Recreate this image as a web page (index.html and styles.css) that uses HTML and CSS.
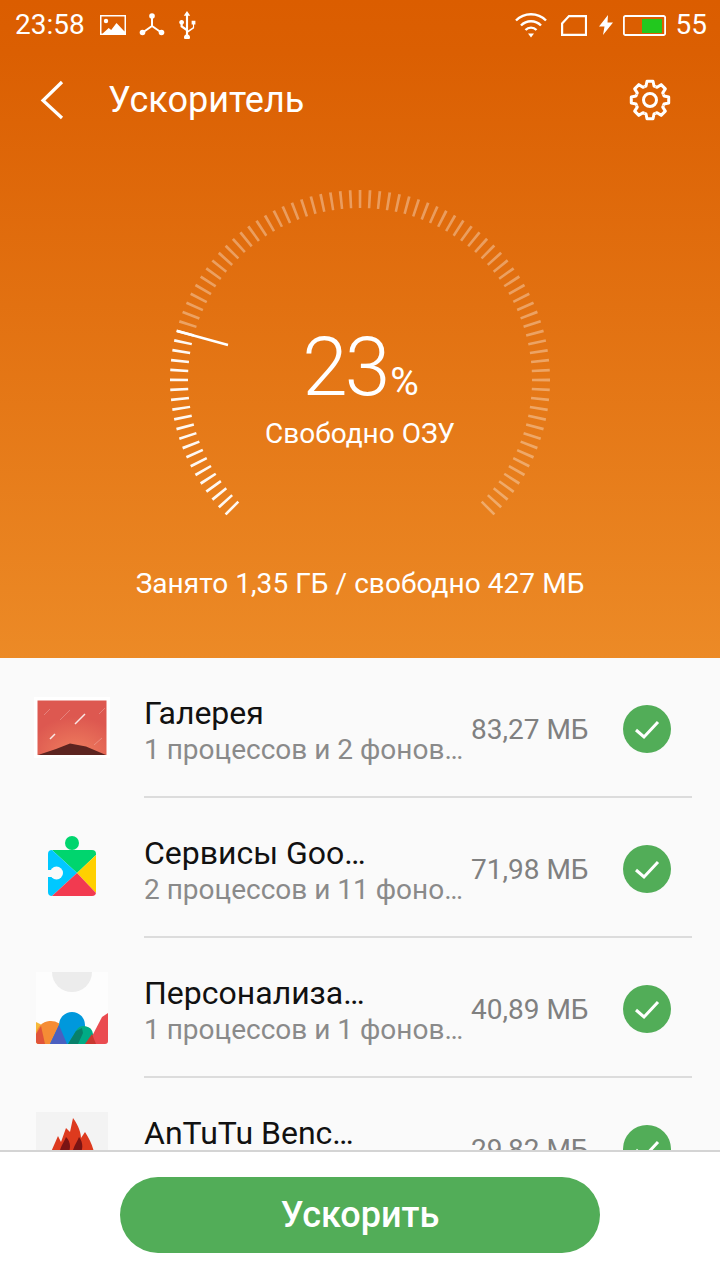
FILE: index.html
```html
<!DOCTYPE html>
<html lang="ru">
<head>
<meta charset="utf-8">
<title>Ускоритель</title>
<link rel="stylesheet" href="styles.css">
</head>
<body>
<div class="screen">
  <section class="hero">
    <div class="status">
      <div class="status-left">
        <span class="clock">23:58</span>
        <svg class="si si-img" viewBox="0 0 26 20"><path fill="#fff" fill-rule="evenodd" d="M0 0h26v20H0zM1.500 1.500v17h1.200l6-5.500 2.500 2 5.300-7 8 8.500V1.500z"/><circle cx="6" cy="6" r="2.200" fill="#fff"/></svg>
        <svg class="si si-tri" viewBox="0 0 26 24"><path fill="none" stroke="#fff" stroke-width="2" d="M13 3v10L3 20M13 13l10 7"/><circle cx="13" cy="3" r="2.800" fill="#fff"/><circle cx="3.500" cy="19.500" r="2.800" fill="#fff"/><circle cx="22.500" cy="19.500" r="2.800" fill="#fff"/></svg>
        <svg class="si si-usb" viewBox="0 0 18 26"><path fill="#fff" d="M9 0l3 4.500h-2v13.500l4.500-3v-2.500h-1.200v-3.500h3.500v3.500h-1.200v3.500l-5.600 4v1.800a2.800 2.800 0 1 1-2 0v-3.500l-5-3.500v-2.300a2.200 2.200 0 1 1 2 0v1.300l3 2V4.500H6z"/></svg>
      </div>
      <div class="status-right">
        <svg class="si si-wifi" viewBox="0 0 32 26"><g fill="none" stroke="#fff" stroke-width="2.400"><path d="M1 8.500a21 21 0 0 1 30 0"/><path d="M6 13.500a14 14 0 0 1 20 0"/><path d="M10.500 18a7.500 7.500 0 0 1 11 0"/></g><path fill="#fff" d="M13 21.500h6l-3 4z"/></svg>
        <svg class="si si-sim" viewBox="0 0 26 21"><path fill="none" stroke="#fff" stroke-width="2.200" d="M1.100 8.500L8 1.100h17v18.800H1.100z"/></svg>
        <svg class="si si-bolt" viewBox="0 0 14 20"><path fill="#fff" d="M9 0L0 11.500h5.500L4 20l10-12.500H8.500z"/></svg>
        <svg class="si si-bat" viewBox="0 0 44 21"><path fill="none" stroke="#fff" stroke-width="1.800" d="M3.500 1h38a1.600 1.600 0 0 1 1.600 1.600v15.800a1.600 1.600 0 0 1-1.600 1.600h-38a1.600 1.600 0 0 1-1.600-1.600V2.600A1.600 1.600 0 0 1 3.500 1z"/><rect x="20" y="4" width="20" height="14" fill="#22c81e"/></svg>
        <span class="clock">55</span>
      </div>
    </div>
    <div class="toolbar">
      <svg class="back" viewBox="0 0 24 40"><path fill="none" stroke="#fff" stroke-width="3.200" d="M22 2L3 20.500 22 38"/></svg>
      <h1 class="title">Ускоритель</h1>
      <svg class="gear" viewBox="-21 -21 42 42">
        <defs><path id="tooth" d="M-5.550-13.400L-4-14l1-4.700h6L4-14l1.550.6"/></defs>
        <g fill="none" stroke="#fff" stroke-width="3" stroke-linejoin="round">
          <use href="#tooth"/><use href="#tooth" transform="rotate(45)"/><use href="#tooth" transform="rotate(90)"/><use href="#tooth" transform="rotate(135)"/><use href="#tooth" transform="rotate(180)"/><use href="#tooth" transform="rotate(225)"/><use href="#tooth" transform="rotate(270)"/><use href="#tooth" transform="rotate(315)"/>
          <circle r="6.500"/>
        </g>
      </svg>
    </div>
    <div class="gauge">
      <svg class="gauge-dial" viewBox="0 0 400 340">
        <path class="ticks ticks-on" pathLength="20.333" d="M73.100 329.100A181 181 0 0 1 25.600 151.600"/>
        <path class="ticks ticks-off" pathLength="69.333" d="M27.400 145.600A181 181 0 1 1 326.900 329.100"/>
        <line class="needle" x1="17" y1="151" x2="68" y2="165"/>
      </svg>
      <div class="gauge-value">
        <div class="percent"><span class="num">23</span><span class="sign">%</span></div>
        <div class="free">Свободно ОЗУ</div>
      </div>
    </div>
    <p class="usage">Занято 1,35 ГБ / свободно 427 МБ</p>
  </section>

  <main class="list">
    <div class="row">
      <svg class="icon" viewBox="0 0 72 72">
        <defs><radialGradient id="glow" cx=".55" cy="1" r=".7"><stop offset="0" stop-color="#f0805f"/><stop offset="1" stop-color="#dd5850"/></radialGradient></defs>
        <rect x="-2" y="5" width="76" height="61" fill="#fff"/>
        <rect x="1.500" y="8.500" width="69" height="54.500" fill="url(#glow)"/>
        <path fill="#5c2420" d="M2 63l18-6 14-5.500 16 3 20 8.500z"/>
        <path stroke="#fff" stroke-width="1.500" d="M39 32l10-10M14 47l5-5" opacity=".85"/>
        <path stroke="#fff" stroke-width="1" d="M8 23l6-6M24 28l10-10M63 22l6-6M58 53l8-7" opacity=".25"/>
      </svg>
      <div class="row-body">
        <div class="row-text">
          <div class="name">Галерея</div>
          <div class="procs">1 процессов и 2 фоновых</div>
        </div>
        <span class="size">83,27 МБ</span>
        <svg class="check" viewBox="0 0 48 48"><circle cx="24" cy="24" r="24" fill="#52ad58"/><path fill="none" stroke="#fff" stroke-width="3" d="M13 25l8 7 14-15"/></svg>
      </div>
    </div>
    <div class="row">
      <svg class="icon" viewBox="0 0 72 72">
        <defs><clipPath id="pz"><rect x="12" y="18" width="48" height="46" rx="4"/></clipPath></defs>
        <circle cx="36" cy="11" r="7" fill="#00d56e"/>
        <g clip-path="url(#pz)">
          <path fill="#00d56e" d="M12 18h48v5L41 41 16 18z"/>
          <path fill="#00c8ff" d="M12 18h4l25 23-25 23h-4z"/>
          <path fill="#ffd000" d="M60 23v38L41 41z"/>
          <path fill="#f23a50" d="M41 41l19 20v3H16z"/>
        </g>
        <circle cx="20.500" cy="41" r="6.500" fill="#fafafa"/>
        <rect x="10" y="38" width="8" height="7" fill="#fafafa"/>
      </svg>
      <div class="row-body">
        <div class="row-text">
          <div class="name">Сервисы Google Play</div>
          <div class="procs">2 процессов и 11 фоновых</div>
        </div>
        <span class="size">71,98 МБ</span>
        <svg class="check" viewBox="0 0 48 48"><circle cx="24" cy="24" r="24" fill="#52ad58"/><path fill="none" stroke="#fff" stroke-width="3" d="M13 25l8 7 14-15"/></svg>
      </div>
    </div>
    <div class="row">
      <svg class="icon" viewBox="0 0 72 72">
        <defs><clipPath id="hl"><rect width="72" height="72" rx="3"/></clipPath></defs>
        <rect width="72" height="72" fill="#fdfdfd"/>
        <path fill="#ececec" d="M16 0h40a20 20 0 0 1-40 0z"/>
        <g clip-path="url(#hl)">
          <path fill="#f6b93b" d="M0 50l8 4v18H0z"/>
          <path fill="#f58c35" d="M0 72V62a15 15 0 0 1 29-3l3 13z"/>
          <path fill="#e0533a" d="M0 72V62l5-8 4 18z"/>
          <path fill="#0098dc" d="M14 72l9-19a13 13 0 0 1 26 0v19z"/>
          <path fill="#4a5fc0" d="M14 72l9-19 8 19z"/>
          <path fill="#00ab85" d="M32 72l8-13a9 9 0 0 1 17 3v10z"/>
          <path fill="#08806a" d="M32 72l8-13 6-3 1 5-5 11z"/>
          <path fill="#ea4b50" d="M52 72l14-27 6-4v31z"/>
          <path fill="#c9382f" d="M49 72l7-10 4 10z"/>
        </g>
      </svg>
      <div class="row-body">
        <div class="row-text">
          <div class="name">Персонализация</div>
          <div class="procs">1 процессов и 1 фоновых</div>
        </div>
        <span class="size">40,89 МБ</span>
        <svg class="check" viewBox="0 0 48 48"><circle cx="24" cy="24" r="24" fill="#52ad58"/><path fill="none" stroke="#fff" stroke-width="3" d="M13 25l8 7 14-15"/></svg>
      </div>
    </div>
    <div class="row">
      <svg class="icon" viewBox="0 0 72 72">
        <rect width="72" height="72" fill="#f3f3f3"/>
        <path fill="#dd3a1e" d="M15 40L22 24l3 6 5-14 4 4 3-14c6 8 8 16 8 20l4-6c4 6 7 12 9 20v32H15z"/>
        <path fill="#7a1414" d="M24 38c2-6 5-10 6-13 4 4 5 9 3 15zM37 38c2-6 5-10 6-13 4 5 4 11 2 15z"/>
      </svg>
      <div class="row-body">
        <div class="row-text">
          <div class="name">AnTuTu Benchmark</div>
          <div class="procs">1 процессов и 1 фоновых</div>
        </div>
        <span class="size">29,82 МБ</span>
        <svg class="check" viewBox="0 0 48 48"><circle cx="24" cy="24" r="24" fill="#52ad58"/><path fill="none" stroke="#fff" stroke-width="3" d="M13 25l8 7 14-15"/></svg>
      </div>
    </div>
  </main>

  <footer class="footer">
    <button class="boost" type="button">Ускорить</button>
  </footer>
</div>
</body>
</html>
```
FILE: styles.css
```css
* { box-sizing: border-box; }
html, body { margin: 0; padding: 0; }
body { font-family: Roboto, "Noto Sans", sans-serif; background: #fafafa; }
.screen { width: 720px; height: 1280px; display: flex; flex-direction: column; overflow: hidden; }

.hero { height: 658px; flex: none; background: linear-gradient(180deg, #db5d00 0%, #db5f02 8%, #ec8a26 100%); color: #fff; display: flex; flex-direction: column; }

.status { height: 50px; flex: none; display: flex; justify-content: space-between; align-items: center; padding: 0 13px 0 15px; }
.status-left, .status-right { display: flex; align-items: center; }
.clock { font-size: 28px; line-height: 50px; color: #fff; }
.si { display: block; flex: none; }
.si-img { width: 26px; height: 20px; margin-left: 15px; }
.si-tri { width: 26px; height: 24px; margin-left: 13px; }
.si-usb { width: 20px; height: 28px; margin-left: 12px; }
.si-wifi { width: 32px; height: 26px; }
.si-sim { width: 26px; height: 21px; margin-left: 14px; }
.si-bolt { width: 14px; height: 20px; margin-left: 12px; }
.si-bat { width: 44px; height: 21px; margin-left: 9px; }
.status-right .clock { margin-left: 10px; }

.toolbar { height: 100px; flex: none; display: flex; align-items: center; padding: 0 49px 0 40px; }
.back { width: 24px; height: 40px; flex: none; }
.title { margin: 0 0 0 44px; flex: 1; font-size: 36px; font-weight: 400; line-height: 100px; }
.gear { width: 42px; height: 42px; flex: none; }

.gauge { position: relative; width: 400px; height: 340px; flex: none; margin: 30px auto 0; }
.gauge-dial { display: block; width: 400px; height: 340px; }
.ticks { fill: none; stroke: #fff; stroke-width: 18; stroke-dasharray: .28 .72; stroke-dashoffset: -.0267; }
.ticks-on { opacity: .95; }
.ticks-off { opacity: .34; }
.needle { stroke: #fff; stroke-width: 2.500; }
.gauge-value { position: absolute; left: 0; right: 0; top: 142px; text-align: center; }
.percent { display: flex; justify-content: center; align-items: baseline; height: 90px; line-height: 90px; padding-left: 1px; }
.num { font-size: 82px; font-weight: 300; letter-spacing: -3px; }
.sign { font-size: 39px; font-weight: 400; margin-left: 3px; }
.free { font-size: 28px; line-height: 40px; margin-top: 2px; color: #fff; }
.usage { margin: 45px 0 0; text-align: center; font-size: 28px; letter-spacing: .06px; line-height: 38px; color: #fff; }

.list { flex: 1; min-height: 0; overflow: hidden; background: #fafafa; padding: 0 28px 0 36px; }
.row { height: 140px; display: flex; align-items: center; }
.icon { width: 72px; height: 72px; flex: none; overflow: visible; }
.row-body { margin-left: 36px; flex: 1; min-width: 0; height: 140px; display: flex; align-items: center; border-bottom: 2px solid #dcdcdc; padding: 4px 21px 0 0; }
.row-text { flex: 1; min-width: 0; padding-top: 2px; }
.name, .procs { white-space: nowrap; overflow: hidden; text-overflow: ellipsis; }
.name { font-size: 32px; line-height: 39px; color: #111; max-width: 222px; }
.procs { font-size: 28px; line-height: 34px; color: #8a8a8a; }
.size { flex: none; width: 118px; margin-left: 6px; font-size: 28px; color: #808080; white-space: nowrap; }
.check { width: 48px; height: 48px; flex: none; margin-left: 34px; }

.footer { flex: none; height: 130px; background: #fff; border-top: 2px solid #d4d4d4; display: flex; justify-content: center; align-items: center; padding-bottom: 2px; }
.boost { width: 480px; height: 76px; border: 0; border-radius: 38px; background: #52ad58; color: #fff; font-family: inherit; font-size: 36px; font-weight: 500; }
```
